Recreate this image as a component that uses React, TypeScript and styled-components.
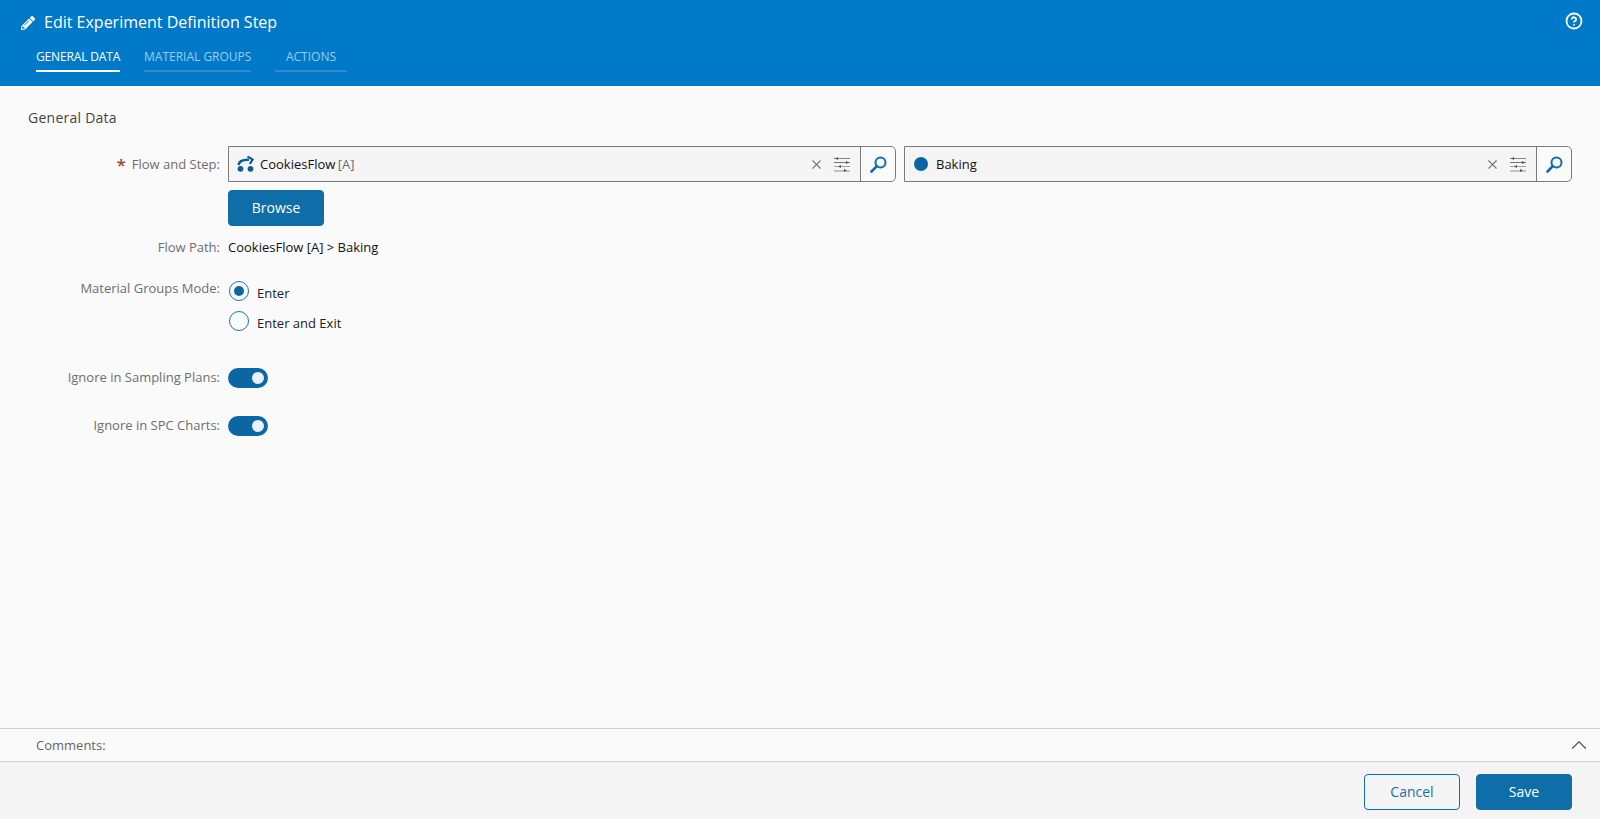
import React from "react";
import styled, { createGlobalStyle } from "styled-components";
import { FaPencilAlt } from "react-icons/fa";
import { CircleHelp, X, ChevronUp } from "lucide-react";

const Global = createGlobalStyle`
  html, body { margin: 0; padding: 0; height: 100%; }
  body { font-family: "Open Sans", "Noto Sans", sans-serif; background: #fafafa; color: #111; overflow: hidden; }
  #root { height: 100%; }
`;

const Page = styled.div`
  display: flex;
  flex-direction: column;
  height: 819px;
`;

const Header = styled.header`
  height: 86px;
  flex: none;
  background: #0079c9;
  display: flex;
  flex-direction: column;
  padding: 12px 18px 0 21px;
  box-sizing: border-box;
`;

const TitleRow = styled.div`
  display: flex;
  align-items: center;
  color: #fff;
  height: 21px;
`;

const Title = styled.h1`
  margin: 0 0 0 9px;
  font-size: 16px;
  font-weight: 400;
  line-height: 21px;
  flex: 1;
`;

const HelpButton = styled.span`
  display: flex;
  margin-top: -4px;
  margin-right: -1px;
`;

const Tabs = styled.nav`
  display: flex;
  margin: 14px 0 0 15px;
`;

const Tab = styled.div<{ $active?: boolean; $width: number; $gap: number }>`
  width: ${(p) => p.$width}px;
  margin-right: ${(p) => p.$gap}px;
  height: 25px;
  box-sizing: border-box;
  text-align: center;
  font-size: 12px;
  line-height: 20px;
  white-space: nowrap;
  letter-spacing: ${(p) => (p.$active ? "-0.15px" : "0")};
  color: ${(p) => (p.$active ? "#fff" : "#9ccdee")};
  border-bottom: 2px solid ${(p) => (p.$active ? "#fff" : "#2b8ccf")};
`;

const Main = styled.main`
  flex: 1;
  padding: 23px 28px 0;
  min-height: 0;
`;

const SectionTitle = styled.h2`
  margin: 0 0 19px;
  font-size: 14px;
  line-height: 18px;
  font-weight: 400;
  letter-spacing: 0.25px;
  color: #444;
`;

const Form = styled.div`
  display: grid;
  grid-template-columns: 192px 1fr;
  column-gap: 8px;
`;

const Label = styled.div<{ $top?: number }>`
  grid-column: 1;
  text-align: right;
  font-size: 13px;
  line-height: 16px;
  color: #6e6e6e;
  white-space: nowrap;
  padding-top: ${(p) => p.$top ?? 0}px;
`;

const Req = styled.span`
  color: #8c4a2c;
  font-size: 17px;
  line-height: 16px;
  font-weight: 600;
  margin-right: 6px;
  position: relative;
  top: 2px;
`;

const Value = styled.div<{ $top?: number; $bottom?: number }>`
  grid-column: 2;
  padding-top: ${(p) => p.$top ?? 0}px;
  margin-bottom: ${(p) => p.$bottom ?? 0}px;
`;

const FieldRow = styled.div`
  display: flex;
  gap: 8px;
`;

const Field = styled.div`
  flex: 1;
  height: 36px;
  box-sizing: border-box;
  border: 1px solid #7b7b7b;
  border-radius: 0 5px 5px 0;
  background: #f5f5f5;
  display: flex;
  align-items: center;
  padding-left: 8px;
`;

const FieldText = styled.span`
  margin-left: 5px;
  font-size: 13px;
  color: #111;
  flex: 1;
`;

const Revision = styled.span`
  color: #5f6b72;
  margin-left: -1px;
`;

const Dot = styled.span`
  width: 14px;
  height: 14px;
  border-radius: 50%;
  background: #0a67a3;
  margin: 0 3px 0 1px;
`;

const ClearIcon = styled(X)`
  color: #7d786c;
  margin-right: 10px;
`;

const SearchButton = styled.span`
  width: 34px;
  height: 100%;
  margin-left: 10px;
  border-left: 1px solid #7b7b7b;
  background: #fafafa;
  border-radius: 0 5px 5px 0;
  display: flex;
  align-items: center;
  justify-content: center;
`;

const Button = styled.button<{ $outline?: boolean }>`
  width: 96px;
  height: 36px;
  box-sizing: border-box;
  border-radius: 4px;
  border: 1px solid #0d6ea8;
  background: ${(p) => (p.$outline ? "transparent" : "#0d6ea8")};
  color: ${(p) => (p.$outline ? "#1c6ea4" : "#fff")};
  font-family: inherit;
  font-size: 14px;
  padding: 0 0 2px;
`;

const BrowseButton = styled(Button)`
  display: block;
  margin-top: 8px;
`;

const PathText = styled.div`
  font-size: 13px;
  line-height: 18px;
  color: #111;
`;

const RadioRow = styled.label<{ $bottom?: number }>`
  display: flex;
  align-items: center;
  height: 20px;
  margin-left: 1px;
  margin-bottom: ${(p) => p.$bottom ?? 0}px;
  font-size: 13px;
  color: #222;
`;

const RadioText = styled.span`
  padding-top: 3px;
`;

const RadioCircle = styled.span<{ $on?: boolean }>`
  width: 20px;
  height: 20px;
  box-sizing: border-box;
  border: 1.5px solid #1a74b0;
  border-radius: 50%;
  margin-right: 8px;
  display: flex;
  align-items: center;
  justify-content: center;
  &::after {
    content: "";
    display: ${(p) => (p.$on ? "block" : "none")};
    width: 10px;
    height: 10px;
    border-radius: 50%;
    background: #0a67a3;
  }
`;

const Toggle = styled.span`
  display: flex;
  width: 40px;
  height: 20px;
  border-radius: 10px;
  background: #0a67a3;
  align-items: center;
  justify-content: flex-end;
  padding-right: 4px;
  box-sizing: border-box;
  &::after {
    content: "";
    width: 12px;
    height: 12px;
    border-radius: 50%;
    background: #e8f2f7;
  }
`;

const Comments = styled.div`
  flex: none;
  height: 34px;
  box-sizing: border-box;
  border-top: 1px solid #cfcfcf;
  border-bottom: 1px solid #cfcfcf;
  display: flex;
  align-items: center;
  justify-content: space-between;
  padding: 0 8px 0 36px;
  font-size: 13px;
  color: #666;
`;

const Footer = styled.footer`
  flex: none;
  height: 57px;
  background: #f4f4f4;
  display: flex;
  justify-content: flex-end;
  gap: 16px;
  padding: 12px 28px 0 0;
  box-sizing: border-box;
`;

const FlowIcon = () => (
  <svg width="18" height="16" viewBox="0 0 18 16" fill="none">
    <circle cx="3.5" cy="12.8" r="2.9" fill="#0a5f99" />
    <circle cx="13.5" cy="12.8" r="2.9" fill="#0a5f99" />
    <path d="M1.6 9C2 5.4 5.6 3.6 12 3.8" stroke="#0a5f99" strokeWidth="2.6" />
    <path d="M10.5 0.4L15.6 3.6L12.8 8" stroke="#0a5f99" strokeWidth="2.2" />
  </svg>
);

const SlidersIcon = () => (
  <svg width="16" height="15" viewBox="0 0 16 15">
    <rect x="0" y="1" width="16" height="1" fill="#8a867c" />
    <path d="M1 1.5L4 0V3Z" fill="#555" />
    <rect x="0" y="5" width="16" height="1" fill="#77736a" />
    <path d="M15 5.5L12 4V7Z" fill="#555" />
    <rect x="0" y="9" width="16" height="1" fill="#a5a5a5" />
    <path d="M4 9.5L7 8V11Z" fill="#555" />
    <rect x="0" y="13" width="16" height="2" fill="#c2c2c2" />
    <path d="M13 13.5L10 12V15Z" fill="#555" />
  </svg>
);

const SearchIcon = () => (
  <svg width="17" height="17" viewBox="0 0 17 17" fill="none">
    <circle cx="10.5" cy="6.5" r="5" stroke="#0f6cab" strokeWidth="2" />
    <path d="M6.8 10.2L1.5 15.5" stroke="#0f6cab" strokeWidth="2.6" strokeLinecap="round" />
  </svg>
);

const LookupField = ({ icon, children }: { icon: React.ReactNode; children: React.ReactNode }) => (
  <Field>
    {icon}
    <FieldText>{children}</FieldText>
    <ClearIcon size={15} strokeWidth={1.8} />
    <SlidersIcon />
    <SearchButton>
      <SearchIcon />
    </SearchButton>
  </Field>
);

export default function App() {
  return (
    <Page>
      <Global />
      <Header>
        <TitleRow>
          <FaPencilAlt size={14} />
          <Title>Edit Experiment Definition Step</Title>
          <HelpButton>
            <CircleHelp size={18} strokeWidth={2.4} />
          </HelpButton>
        </TitleRow>
        <Tabs>
          <Tab $active $width={84} $gap={24}>GENERAL DATA</Tab>
          <Tab $width={107} $gap={24}>MATERIAL GROUPS</Tab>
          <Tab $width={72} $gap={0}>ACTIONS</Tab>
        </Tabs>
      </Header>
      <Main>
        <SectionTitle>General Data</SectionTitle>
        <Form>
          <Label $top={9}><Req>*</Req>Flow and Step:</Label>
          <Value $bottom={12}>
            <FieldRow>
              <LookupField icon={<FlowIcon />}>CookiesFlow <Revision>[A]</Revision></LookupField>
              <LookupField icon={<Dot />}>Baking</LookupField>
            </FieldRow>
            <BrowseButton>Browse</BrowseButton>
          </Value>
          <Label $top={1}>Flow Path:</Label>
          <Value $bottom={24}>
            <PathText>CookiesFlow [A] &gt; Baking</PathText>
          </Value>
          <Label>Material Groups Mode:</Label>
          <Value $top={1} $bottom={37}>
            <RadioRow $bottom={10}><RadioCircle $on /><RadioText>Enter</RadioText></RadioRow>
            <RadioRow><RadioCircle /><RadioText>Enter and Exit</RadioText></RadioRow>
          </Value>
          <Label $top={1}>Ignore in Sampling Plans:</Label>
          <Value $bottom={28}><Toggle /></Value>
          <Label $top={1}>Ignore in SPC Charts:</Label>
          <Value><Toggle /></Value>
        </Form>
      </Main>
      <Comments>
        Comments:
        <ChevronUp size={26} strokeWidth={1.1} color="#555" />
      </Comments>
      <Footer>
        <Button $outline>Cancel</Button>
        <Button>Save</Button>
      </Footer>
    </Page>
  );
}
